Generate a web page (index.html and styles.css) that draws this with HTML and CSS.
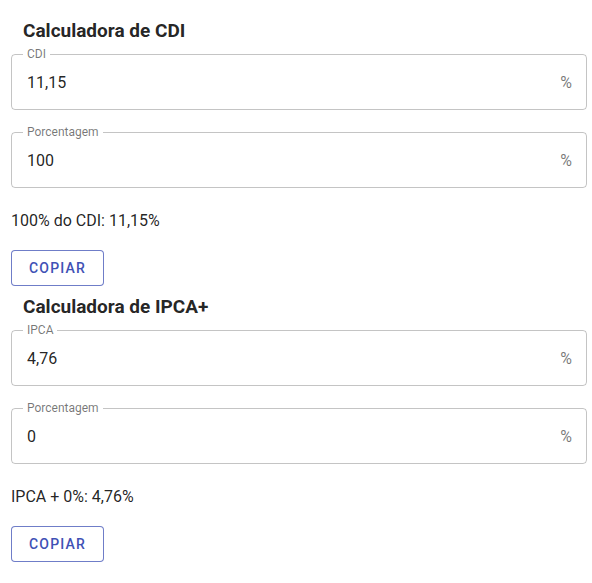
FILE: index.html
```html
<!DOCTYPE html>
<html lang="pt-BR">
<head>
  <meta charset="UTF-8" />
  <meta name="viewport" content="width=device-width, initial-scale=1.0"/>
  <title>Calculadoras</title>
  <link rel="stylesheet" href="styles.css">
</head>
<body>
  <div class="container">
    <section class="calc">
      <h2 class="calc-title">Calculadora de CDI</h2>
      <div class="field">
        <label class="field-label">CDI</label>
        <input class="field-input" type="text" value="11,15">
        <span class="field-suffix">%</span>
      </div>
      <div class="field">
        <label class="field-label">Porcentagem</label>
        <input class="field-input" type="text" value="100">
        <span class="field-suffix">%</span>
      </div>
      <p class="result">100% do CDI: 11,15%</p>
      <button class="btn-outlined">Copiar</button>
    </section>

    <section class="calc">
      <h2 class="calc-title">Calculadora de IPCA+</h2>
      <div class="field">
        <label class="field-label">IPCA</label>
        <input class="field-input" type="text" value="4,76">
        <span class="field-suffix">%</span>
      </div>
      <div class="field">
        <label class="field-label">Porcentagem</label>
        <input class="field-input" type="text" value="0">
        <span class="field-suffix">%</span>
      </div>
      <p class="result">IPCA + 0%: 4,76%</p>
      <button class="btn-outlined">Copiar</button>
    </section>
  </div>
</body>
</html>
```

FILE: styles.css
```css
body {
  font-family: Roboto, "Liberation Sans", sans-serif;
  background: #fff;
  color: rgba(0,0,0,0.87);
  margin: 0;
}

.container {
  padding: 15px 5px 0 11px;
}

.calc {
  display: flex;
  flex-direction: column;
  align-items: stretch;
}

.calc + .calc {
  margin-top: 5px;
}

.calc-title {
  margin: 0 0 0 12px;
  font-size: 19px;
  font-weight: 700;
  line-height: 32px;
  color: rgba(0,0,0,0.87);
}

.field {
  position: relative;
  display: flex;
  align-items: center;
  height: 56px;
  box-sizing: border-box;
  padding: 0 14px 0 15px;
  border: 1px solid rgba(0,0,0,0.23);
  border-radius: 4px;
  margin-top: 22px;
}

.calc-title + .field {
  margin-top: 7px;
}

.field-label {
  position: absolute;
  top: -9px;
  left: 11px;
  padding: 0 4px;
  background: #fff;
  font-size: 12px;
  line-height: 16px;
  color: rgba(0,0,0,0.54);
}

.field-input {
  flex: 1;
  min-width: 0;
  border: none;
  outline: none;
  padding: 0;
  font-family: inherit;
  font-size: 16px;
  color: rgba(0,0,0,0.87);
  background: transparent;
}

.field-suffix {
  margin-left: 8px;
  font-size: 16px;
  color: rgba(0,0,0,0.54);
}

.result {
  margin: 21px 0 0;
  font-size: 16px;
  line-height: 24px;
}

.btn-outlined {
  align-self: flex-start;
  margin-top: 17px;
  height: 36px;
  padding: 0 17px;
  min-width: 64px;
  font-family: inherit;
  font-size: 14px;
  font-weight: 500;
  letter-spacing: 1.2px;
  text-transform: uppercase;
  color: #3f51b5;
  background: #fff;
  border: 1px solid rgba(63,81,181,0.75);
  border-radius: 4px;
  cursor: pointer;
}
```
